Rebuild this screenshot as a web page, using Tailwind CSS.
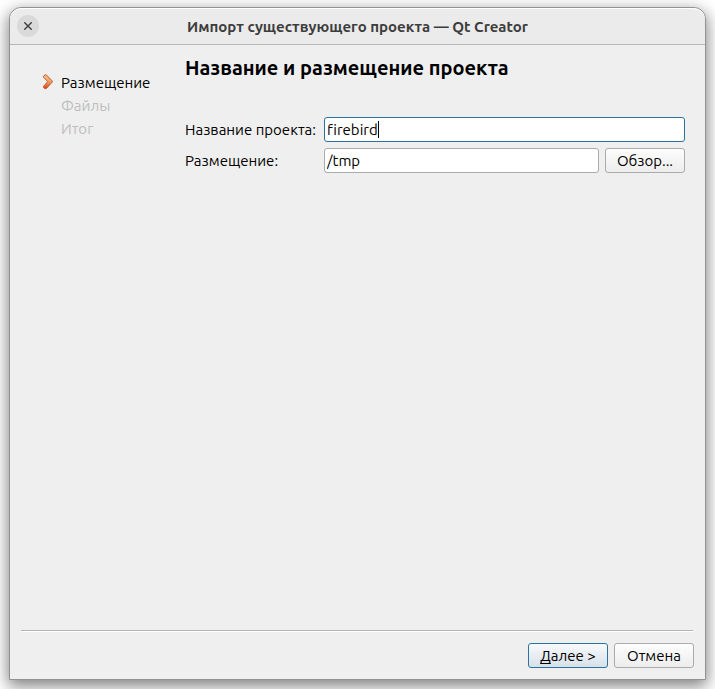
<!DOCTYPE html>
<html lang="ru">
<head>
<meta charset="utf-8">
<meta name="viewport" content="width=device-width, initial-scale=1">
<title>Импорт существующего проекта — Qt Creator</title>
<script src="https://cdn.jsdelivr.net/npm/@tailwindcss/browser@4"></script>
</head>
<body class="flex min-h-screen flex-col overflow-hidden bg-white px-[9px] pt-[7px] pb-[9px] font-['Ubuntu','Noto_Sans',sans-serif] text-[15px] leading-5 text-black [font-variant-ligatures:none]">
<div role="dialog" aria-labelledby="title" class="flex grow flex-col rounded-t-xl border border-[#929292] bg-[#efefef] shadow-[0_5px_16px_1px_rgba(0,0,0,0.5)]">
  <header class="grid h-[37px] grid-cols-[36px_1fr_36px] items-center rounded-t-xl border-t border-b border-t-white border-b-[#b9b9b9] bg-[#ebebeb]">
    <button type="button" aria-label="Закрыть" class="mb-0.5 ml-[7px] flex size-[22px] items-center justify-center rounded-full bg-[#dadada]">
      <svg class="size-2" viewBox="0 0 8 8" fill="none" stroke="#3d3d3d" stroke-width="1.4"><path d="M.3.3l7.4 7.4M7.7.3L.3 7.7"/></svg>
    </button>
    <h1 id="title" class="text-center font-bold text-[#3d3d3d]">Импорт существующего проекта — Qt Creator</h1>
  </header>

  <main class="flex grow px-[11px]">
    <nav aria-label="Шаги" class="w-[164px] shrink-0 pt-[26px]">
      <ol class="leading-[23px] text-[#bebebe]">
        <li aria-current="step" class="flex items-center text-black">
          <span class="flex w-10 justify-end pr-[7px] pb-0.5">
            <svg class="h-4 w-3" viewBox="0 0 12 16">
              <defs><linearGradient id="arrow" x1="0" y1="0" x2="0" y2="1"><stop offset="0" stop-color="#f8c48a"/><stop offset=".5" stop-color="#f0a06a"/><stop offset="1" stop-color="#e03c12"/></linearGradient></defs>
              <path d="M1.5 2.2L3 .9h1.3l5.9 6v1.2l-5.9 6.5H2.7L1.5 13.4v-1L5.8 7.5 1.5 3.2z" fill="url(#arrow)" stroke="#c05a28" stroke-linejoin="round"/>
            </svg>
          </span>Размещение</li>
        <li class="pl-10">Файлы</li>
        <li class="pl-10">Итог</li>
      </ol>
    </nav>

    <section class="grow pt-2 pr-[9px]">
      <h2 class="text-xl leading-[30px] font-bold">Название и размещение проекта</h2>
      <form id="project" class="mt-[34px] grid grid-cols-[133px_1fr] items-center gap-x-1.5 gap-y-1.5">
        <label for="name" class="whitespace-nowrap">Название проекта:</label>
        <div class="relative flex">
          <input id="name" type="text" value="firebird" class="h-[25px] w-full rounded-[3px] border border-[#2b739f] bg-white px-0.5 caret-transparent outline-none [font-variant-ligatures:none]">
          <div aria-hidden="true" class="pointer-events-none absolute inset-y-1 left-[3px] flex border-r border-black"><span class="invisible">firebird</span></div>
        </div>
        <label for="path">Размещение:</label>
        <div class="flex gap-1.5">
          <input id="path" type="text" value="/tmp" class="h-[25px] w-full min-w-0 rounded-[3px] border border-[#ababab] bg-white px-0.5 outline-none">
          <button type="button" class="h-[25px] w-20 shrink-0 rounded-[3px] border border-[#ababab] bg-linear-to-b from-[#fdfdfd] to-[#ededed]">Обзор...</button>
        </div>
      </form>
    </section>
  </main>

  <footer class="mr-3 ml-[11px] border-t border-[#b4b4b4] shadow-[inset_0_1px_0_#fff]">
    <div class="-mr-px flex justify-end gap-1.5 pt-3 pb-[11px]">
      <button type="submit" form="project" class="h-[25px] w-20 rounded-[3px] border border-[#2b739f] bg-linear-to-b from-[#f8fafc] to-[#d8e0e8]"><span class="underline decoration-1 underline-offset-2 [text-decoration-skip-ink:none]">Д</span>алее &gt;</button>
      <button type="button" class="h-[25px] w-20 rounded-[3px] border border-[#ababab] bg-linear-to-b from-[#fdfdfd] to-[#ededed]">Отмена</button>
    </div>
  </footer>
</div>
</body>
</html>
